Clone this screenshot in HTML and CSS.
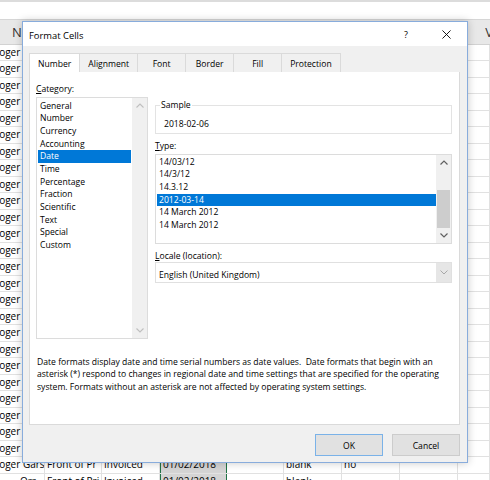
FILE: index.html
```html
<!DOCTYPE html>
<html>
<head>
<meta charset="utf-8">
<link rel="stylesheet" href="styles.css">
</head>
<body>
<div class="sheet">
  <div class="sheet-top"></div>
  <div class="formula"></div>
  <div class="colhead"><span>N</span><span class="hv">V</span></div>
  <div class="rows">
    <div class="row"><div class="c a">Roger Garside</div><div class="c">Front of Pr</div><div class="c">Invoiced</div><div class="c sel">01/02/2018</div><div class="c"></div><div class="c">blank</div><div class="c">no</div><div class="c"></div><div class="c"></div></div>
    <div class="row"><div class="c a">Roger Garside</div><div class="c">Front of Pr</div><div class="c">Invoiced</div><div class="c sel">01/02/2018</div><div class="c"></div><div class="c">blank</div><div class="c">no</div><div class="c"></div><div class="c"></div></div>
    <div class="row"><div class="c a">Roger Garside</div><div class="c">Front of Pr</div><div class="c">Invoiced</div><div class="c sel">01/02/2018</div><div class="c"></div><div class="c">blank</div><div class="c">no</div><div class="c"></div><div class="c"></div></div>
    <div class="row"><div class="c a">Roger Garside</div><div class="c">Front of Pr</div><div class="c">Invoiced</div><div class="c sel">01/02/2018</div><div class="c"></div><div class="c">blank</div><div class="c">no</div><div class="c"></div><div class="c"></div></div>
    <div class="row"><div class="c a">Roger Garside</div><div class="c">Front of Pr</div><div class="c">Invoiced</div><div class="c sel">01/02/2018</div><div class="c"></div><div class="c">blank</div><div class="c">no</div><div class="c"></div><div class="c"></div></div>
    <div class="row"><div class="c a">Roger Garside</div><div class="c">Front of Pr</div><div class="c">Invoiced</div><div class="c sel">01/02/2018</div><div class="c"></div><div class="c">blank</div><div class="c">no</div><div class="c"></div><div class="c"></div></div>
    <div class="row"><div class="c a">Roger Garside</div><div class="c">Front of Pr</div><div class="c">Invoiced</div><div class="c sel">01/02/2018</div><div class="c"></div><div class="c">blank</div><div class="c">no</div><div class="c"></div><div class="c"></div></div>
    <div class="row"><div class="c a">Roger Garside</div><div class="c">Front of Pr</div><div class="c">Invoiced</div><div class="c sel">01/02/2018</div><div class="c"></div><div class="c">blank</div><div class="c">no</div><div class="c"></div><div class="c"></div></div>
    <div class="row"><div class="c a">Roger Garside</div><div class="c">Front of Pr</div><div class="c">Invoiced</div><div class="c sel">01/02/2018</div><div class="c"></div><div class="c">blank</div><div class="c">no</div><div class="c"></div><div class="c"></div></div>
    <div class="row"><div class="c a">Roger Garside</div><div class="c">Front of Pr</div><div class="c">Invoiced</div><div class="c sel">01/02/2018</div><div class="c"></div><div class="c">blank</div><div class="c">no</div><div class="c"></div><div class="c"></div></div>
    <div class="row"><div class="c a">Roger Garside</div><div class="c">Front of Pr</div><div class="c">Invoiced</div><div class="c sel">01/02/2018</div><div class="c"></div><div class="c">blank</div><div class="c">no</div><div class="c"></div><div class="c"></div></div>
    <div class="row"><div class="c a">Roger Garside</div><div class="c">Front of Pr</div><div class="c">Invoiced</div><div class="c sel">01/02/2018</div><div class="c"></div><div class="c">blank</div><div class="c">no</div><div class="c"></div><div class="c"></div></div>
    <div class="row"><div class="c a">Roger Garside</div><div class="c">Front of Pr</div><div class="c">Invoiced</div><div class="c sel">01/02/2018</div><div class="c"></div><div class="c">blank</div><div class="c">no</div><div class="c"></div><div class="c"></div></div>
    <div class="row"><div class="c a">Roger Garside</div><div class="c">Front of Pr</div><div class="c">Invoiced</div><div class="c sel">01/02/2018</div><div class="c"></div><div class="c">blank</div><div class="c">no</div><div class="c"></div><div class="c"></div></div>
    <div class="row"><div class="c a">Roger Garside</div><div class="c">Front of Pr</div><div class="c">Invoiced</div><div class="c sel">01/02/2018</div><div class="c"></div><div class="c">blank</div><div class="c">no</div><div class="c"></div><div class="c"></div></div>
    <div class="row"><div class="c a">Roger Garside</div><div class="c">Front of Pr</div><div class="c">Invoiced</div><div class="c sel">01/02/2018</div><div class="c"></div><div class="c">blank</div><div class="c">no</div><div class="c"></div><div class="c"></div></div>
    <div class="row"><div class="c a">Roger Garside</div><div class="c">Front of Pr</div><div class="c">Invoiced</div><div class="c sel">01/02/2018</div><div class="c"></div><div class="c">blank</div><div class="c">no</div><div class="c"></div><div class="c"></div></div>
    <div class="row"><div class="c a">Roger Garside</div><div class="c">Front of Pr</div><div class="c">Invoiced</div><div class="c sel">01/02/2018</div><div class="c"></div><div class="c">blank</div><div class="c">no</div><div class="c"></div><div class="c"></div></div>
    <div class="row"><div class="c a">Roger Garside</div><div class="c">Front of Pr</div><div class="c">Invoiced</div><div class="c sel">01/02/2018</div><div class="c"></div><div class="c">blank</div><div class="c">no</div><div class="c"></div><div class="c"></div></div>
    <div class="row"><div class="c a">Roger Garside</div><div class="c">Front of Pr</div><div class="c">Invoiced</div><div class="c sel">01/02/2018</div><div class="c"></div><div class="c">blank</div><div class="c">no</div><div class="c"></div><div class="c"></div></div>
    <div class="row"><div class="c a">Roger Garside</div><div class="c">Front of Pr</div><div class="c">Invoiced</div><div class="c sel">01/02/2018</div><div class="c"></div><div class="c">blank</div><div class="c">no</div><div class="c"></div><div class="c"></div></div>
    <div class="row"><div class="c a">Roger Garside</div><div class="c">Front of Pr</div><div class="c">Invoiced</div><div class="c sel">01/02/2018</div><div class="c"></div><div class="c">blank</div><div class="c">no</div><div class="c"></div><div class="c"></div></div>
    <div class="row"><div class="c a">Roger Garside</div><div class="c">Front of Pr</div><div class="c">Invoiced</div><div class="c sel">01/02/2018</div><div class="c"></div><div class="c">blank</div><div class="c">no</div><div class="c"></div><div class="c"></div></div>
    <div class="row"><div class="c a">Roger Garside</div><div class="c">Front of Pr</div><div class="c">Invoiced</div><div class="c sel">01/02/2018</div><div class="c"></div><div class="c">blank</div><div class="c">no</div><div class="c"></div><div class="c"></div></div>
    <div class="row"><div class="c a">Roger Garside</div><div class="c">Front of Pr</div><div class="c">Invoiced</div><div class="c sel">01/02/2018</div><div class="c"></div><div class="c">blank</div><div class="c">no</div><div class="c"></div><div class="c"></div></div>
    <div class="row"><div class="c a">Roger Garside</div><div class="c">Front of Pr</div><div class="c">Invoiced</div><div class="c sel">01/02/2018</div><div class="c"></div><div class="c">blank</div><div class="c">no</div><div class="c"></div><div class="c"></div></div>
    <div class="row"><div class="c a2">Orr</div><div class="c">Front of Pri</div><div class="c">Invoiced</div><div class="c sel">01/02/2018</div><div class="c"></div><div class="c">blank</div><div class="c"></div><div class="c"></div><div class="c"></div></div>
  </div>
</div>

<div class="dialog">
  <div class="titlebar">
    <span class="title">Format Cells</span>
    <span class="tbtn help">?</span>
    <span class="tbtn close"><svg width="10" height="10" viewBox="0 0 10 10"><path d="M0.5 0.5 L9.5 9.5 M9.5 0.5 L0.5 9.5" stroke="#000" stroke-width="1" fill="none"/></svg></span>
  </div>
  <div class="dbody">
    <div class="tabs">
      <div class="tab active">Number</div>
      <div class="tab">Alignment</div>
      <div class="tab">Font</div>
      <div class="tab">Border</div>
      <div class="tab">Fill</div>
      <div class="tab">Protection</div>
    </div>
    <div class="panel">
      <div class="cols">
        <div class="leftcol">
          <div class="lbl"><u>C</u>ategory:</div>
          <div class="listbox catlist">
            <div class="items">
              <div class="item">General</div>
              <div class="item">Number</div>
              <div class="item">Currency</div>
              <div class="item">Accounting</div>
              <div class="item selected">Date</div>
              <div class="item">Time</div>
              <div class="item">Percentage</div>
              <div class="item">Fraction</div>
              <div class="item">Scientific</div>
              <div class="item">Text</div>
              <div class="item">Special</div>
              <div class="item">Custom</div>
            </div>
            <div class="vscroll disabled">
              <div class="sbtn"><svg width="8" height="5" viewBox="0 0 8 5"><polyline points="0.5,4.5 4,1 7.5,4.5" fill="none" stroke="currentColor" stroke-width="1.1"/></svg></div>
              <div class="track"></div>
              <div class="sbtn"><svg width="8" height="5" viewBox="0 0 8 5"><polyline points="0.5,0.5 4,4 7.5,0.5" fill="none" stroke="currentColor" stroke-width="1.1"/></svg></div>
            </div>
          </div>
        </div>
        <div class="rightcol">
          <fieldset class="sample">
            <legend>Sample</legend>
            <div class="sample-val">2018-02-06</div>
          </fieldset>
          <div class="lbl gap"><u>T</u>ype:</div>
          <div class="listbox typelist">
            <div class="items">
              <div class="item">14/03/12</div>
              <div class="item">14/3/12</div>
              <div class="item">14.3.12</div>
              <div class="item selected">2012-03-14</div>
              <div class="item">14 March 2012</div>
              <div class="item">14 March 2012</div>
            </div>
            <div class="vscroll">
              <div class="sbtn"><svg width="8" height="5" viewBox="0 0 8 5"><polyline points="0.5,4.5 4,1 7.5,4.5" fill="none" stroke="currentColor" stroke-width="1.2"/></svg></div>
              <div class="track"><div class="thumb"></div></div>
              <div class="sbtn"><svg width="8" height="5" viewBox="0 0 8 5"><polyline points="0.5,0.5 4,4 7.5,0.5" fill="none" stroke="currentColor" stroke-width="1.2"/></svg></div>
            </div>
          </div>
          <div class="lbl gap"><u>L</u>ocale (location):</div>
          <div class="combo">
            <span class="combo-text">English (United Kingdom)</span>
            <span class="combo-btn"><svg width="8" height="5" viewBox="0 0 8 5"><polyline points="0.5,0.5 4,4 7.5,0.5" fill="none" stroke="currentColor" stroke-width="1"/></svg></span>
          </div>
        </div>
      </div>
      <p class="desc">Date formats display date and time serial numbers as date values.&nbsp; Date formats that begin with an<br>asterisk (*) respond to changes in regional date and time settings that are specified for the operating<br>system. Formats without an asterisk are not affected by operating system settings.</p>
    </div>
    <div class="buttons">
      <div class="btn default">OK</div>
      <div class="btn">Cancel</div>
    </div>
  </div>
</div>
</body>
</html>
```

FILE: styles.css
```css
* { box-sizing: border-box; }
html, body { margin: 0; padding: 0; }
body {
  width: 490px;
  height: 480px;
  overflow: hidden;
  position: relative;
  background: #fff;
  font-family: "Open Sans", sans-serif;
  color: #000;
}

/* spreadsheet background */
.sheet-top { height: 2px; background: #dcdcdc; }
.formula { height: 18px; background: #fff; border-bottom: 1px solid #d6d6d6; }
.colhead {
  height: 24.75px;
  background: #e8e8e8;
  border-bottom: 1px solid #d2d2d2;
  display: flex;
  justify-content: space-between;
  align-items: center;
  padding-left: 12px;
  font-size: 13px;
  color: #333;
}
.hv { margin-right: -3px; }
.row {
  display: grid;
  grid-template-columns: 45px 57px 58px 67px 57px 58px 58px 58px 32px;
  height: 16.5px;
  border-bottom: 1px solid #e1e1e1;
}
.c {
  border-right: 1px solid #e1e1e1;
  font-size: 10px;
  line-height: 15.5px;
  padding-left: 2px;
  white-space: nowrap;
  overflow: hidden;
}
.c.a { padding-left: 0; text-indent: -7px; }
.c.a2 { padding-left: 20px; }
.c.sel {
  background: #d4d4d4;
  border-left: 1px solid #217346;
  border-right: 1px solid #217346;
}

/* dialog */
.dialog {
  position: absolute;
  left: 22px;
  top: 21px;
  width: 446px;
  height: 442px;
  border: 1px solid #88acdc;
  background: #f0f0f0;
  box-shadow: 0 0 8px rgba(0, 0, 0, 0.22);
  display: flex;
  flex-direction: column;
  font-size: 8.6px;
}
.titlebar {
  height: 24px;
  background: #fff;
  display: flex;
  align-items: center;
  padding-left: 6px;
}
.title { font-size: 9.4px; flex: 1; padding-top: 2px; }
.tbtn {
  height: 24px;
  display: flex;
  align-items: center;
  justify-content: center;
}
.help { width: 40px; font-size: 9px; padding-top: 1px; }
.close { width: 41px; }
.close svg { width: 9px; height: 9px; }

.dbody {
  flex: 1;
  padding: 7px 7px 0 6px;
  display: flex;
  flex-direction: column;
}
.tabs { display: flex; height: 19px; }
.tab {
  min-width: 49px;
  padding: 2px 8px 0;
  border: 1px solid #dadada;
  border-bottom: none;
  margin-right: -1px;
  display: flex;
  align-items: center;
  justify-content: center;
  background: #f0f0f0;
}
.tab.active { background: #fff; }

.panel {
  height: 353px;
  background: #fff;
  border: 1px solid #dadada;
  border-top: none;
  padding: 11px 7px 0 6px;
}
.cols { display: flex; gap: 7px; }
.leftcol { width: 112px; }
.rightcol { flex: 1; padding-top: 16px; }
.lbl { line-height: 12px; height: 12px; margin-bottom: 2px; }
.lbl u { text-decoration-thickness: 1px; text-underline-offset: 1px; }
.lbl.gap { margin-top: 6px; }

.listbox {
  border: 1px solid #dcdcdc;
  display: flex;
  background: #fff;
}
.catlist { height: 242px; }
.typelist { height: 90px; }
.items { flex: 1; padding-top: 0.6px; }
.catlist .items { margin-right: 1px; padding-top: 1.6px; }
.item {
  line-height: 12.7px;
  height: 12.7px;
  padding-left: 2px;
  margin-left: 1px;
  white-space: nowrap;
}
.item.selected { background: #0078d7; color: #fff; }

.vscroll {
  width: 15px;
  background: #f0f0f0;
  display: flex;
  flex-direction: column;
  color: #606060;
}
.vscroll.disabled { color: #bfbfbf; }
.sbtn {
  height: 15px;
  display: flex;
  align-items: center;
  justify-content: center;
}
.track { flex: 1; padding-top: 20px; }
.thumb { height: 38px; margin: 0 1px; background: #cdcdcd; }

.sample {
  margin: 0;
  padding: 7px 8px 3px 8px;
  border: 1px solid #e3e3e3;
  height: 35px;
}
.sample legend {
  padding: 0 1px;
  margin-left: -4px;
  line-height: 12px;
}
.sample-val { line-height: 12px; }

.combo {
  margin-top: -2px;
  height: 21px;
  border: 1px solid #e0e0e0;
  display: flex;
  align-items: center;
}
.combo-text { flex: 1; padding-left: 3px; padding-top: 4px; }
.combo-btn {
  width: 15px;
  height: 19px;
  background: #e6e6e6;
  color: #a8a8a8;
  display: flex;
  align-items: center;
  justify-content: center;
}

.desc {
  margin: 16.7px 0 0 1px;
  line-height: 12.6px;
  white-space: nowrap;
}

.buttons {
  display: flex;
  justify-content: flex-end;
  gap: 9px;
  margin-top: 9px;
}
.btn {
  width: 68px;
  height: 22px;
  background: #e1e1e1;
  border: 1px solid #cccccc;
  display: flex;
  align-items: center;
  justify-content: center;
  padding-top: 1px;
}
.btn.default { border-color: #7ab2e8; }
```
